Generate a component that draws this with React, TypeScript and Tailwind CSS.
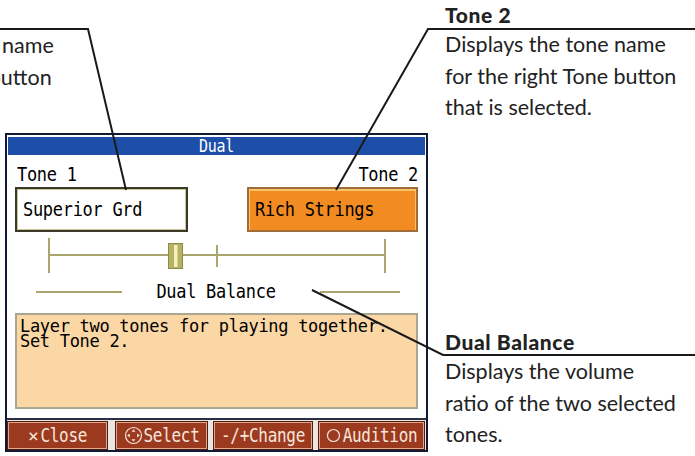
const lcd = "font-['DejaVu_Sans_Mono','Liberation_Mono',monospace] tracking-[-0.3px]";
const note = "font-['Lato','Noto_Sans',sans-serif]";

// taller, narrower look of the keyboard's LCD font
const Tall = ({ children }: { children: React.ReactNode }) => (
  <span className="inline-block scale-y-[1.18]">{children}</span>
);

const DpadIcon = () => (
  <svg width="19" height="19" viewBox="0 0 19 19" className="mr-[1px]">
    <circle cx="9.5" cy="9.5" r="8" fill="none" stroke="#f6e6dc" strokeWidth="1.2" />
    <path d="M9.5 3.2 L7.6 5.8 H11.4 Z M9.5 15.8 L7.6 13.2 H11.4 Z M3.2 9.5 L5.8 7.6 V11.4 Z M15.8 9.5 L13.2 7.6 V11.4 Z" fill="#f6e6dc" />
  </svg>
);

const RingIcon = () => (
  <svg width="15" height="15" viewBox="0 0 15 15" className="mr-[2px]">
    <circle cx="7.5" cy="7.5" r="6" fill="none" stroke="#f6e6dc" strokeWidth="1.2" />
  </svg>
);

const PanelButton = ({ width, children }: { width: string; children: React.ReactNode }) => (
  <div
    className={`${width} flex h-full items-center justify-center border border-[#5a1a0b] bg-[#9c3a1f] text-[16px] leading-none text-[#f6e6dc] shadow-[inset_0_0_0_1px_#d9a890] ${lcd}`}
  >
    {children}
  </div>
);

const Slider = () => (
  <svg width="419" height="35" viewBox="0 0 419 35">
    <line x1="42" y1="17" x2="378" y2="17" stroke="#aaa56c" strokeWidth="2" />
    <line x1="42" y1="0" x2="42" y2="35" stroke="#aaa56c" strokeWidth="2" />
    <line x1="210" y1="7" x2="210" y2="29" stroke="#aaa56c" strokeWidth="2" />
    <line x1="378" y1="1" x2="378" y2="35" stroke="#aaa56c" strokeWidth="2" />
    <rect x="161.5" y="5.5" width="14" height="25" fill="#b7b263" stroke="#8f8b50" />
    <rect x="167" y="7" width="3.5" height="22" fill="#f4f0bc" />
  </svg>
);

export default function App() {
  return (
    <div className="relative h-[456px] w-[695px] overflow-hidden bg-white">
      <div className="pl-[5px] pt-[133px]">
        <div className="flex h-[319px] w-[423px] flex-col border-2 border-[#101a36] bg-white">
          <div className={`mx-[1px] mt-[2px] flex h-[18px] items-center justify-center bg-[#1d4ea8] text-[15px] text-white ${lcd}`}>
            <Tall>Dual</Tall>
          </div>

          <div className={`mt-[9px] flex h-[22px] items-center justify-between pl-[10px] pr-[8px] text-[17px] text-black ${lcd}`}>
            <Tall>Tone 1</Tall>
            <Tall>Tone 2</Tall>
          </div>

          <div className={`mt-[1px] flex h-[45px] justify-between px-[8px] text-[17px] text-black ${lcd}`}>
            <div className="flex w-[173px] items-center border-2 border-[#3a3a28] bg-white pl-[6px] shadow-[inset_0_0_0_1px_#c9c597]">
              <Tall>Superior Grd</Tall>
            </div>
            <div className="flex w-[171px] items-center border-2 border-[#a06d38] bg-[#f28c22] pl-[6px] shadow-[inset_0_1px_0_1px_#f7c46a]">
              <Tall>Rich Strings</Tall>
            </div>
          </div>

          <div className="mt-[6px] h-[35px]">
            <Slider />
          </div>

          <div className={`mt-[10px] flex h-[18px] items-center text-[17px] text-black ${lcd}`}>
            <div className="ml-[29px] h-[2px] w-[86px] bg-[#aaa56c]" />
            <div className="flex-1 pr-[10px] text-center">
              <Tall>Dual Balance</Tall>
            </div>
            <div className="mr-[26px] h-[2px] w-[80px] bg-[#aaa56c]" />
          </div>

          <div
            className={`mx-[8px] mt-[12px] h-[96px] border-2 border-[#a9a78f] bg-[#fbd7a5] px-[3px] pt-[4px] text-[17px] leading-[15px] text-black ${lcd}`}
          >
            <div>Layer two tones for playing together.</div>
            <div>Set Tone 2.</div>
          </div>

          <div className="mt-auto flex h-[32px] gap-[5px] border-t-2 border-[#2a2f45] bg-[#e9e6e2] pr-[1px] pt-[1px]">
            <PanelButton width="w-[101px] mr-[2px]">
              <span className="mr-[2px] text-[18px] font-light">×</span>
              <Tall>Close</Tall>
            </PanelButton>
            <PanelButton width="w-[93px]">
              <DpadIcon />
              <Tall>Select</Tall>
            </PanelButton>
            <PanelButton width="w-[100px]">
              <Tall>-/+Change</Tall>
            </PanelButton>
            <PanelButton width="w-[107px]">
              <RingIcon />
              <Tall>Audition</Tall>
            </PanelButton>
          </div>
        </div>
      </div>

      <svg className="pointer-events-none absolute left-0 top-0" width="695" height="456" viewBox="0 0 695 456">
        <polyline points="0,29 88,29 126,190" fill="none" stroke="#1a1a1a" strokeWidth="2" />
        <polyline points="695,29 428,29 336,190" fill="none" stroke="#1a1a1a" strokeWidth="2" />
        <polyline points="695,355 443,355 312,290" fill="none" stroke="#1a1a1a" strokeWidth="2" />
      </svg>

      <div className={`absolute left-[-167px] top-[30px] whitespace-nowrap text-[21.5px] leading-[31.5px] text-[#222] ${note}`}>
        <div>Displays the tone name</div>
        <div>for the left Tone button</div>
        <div>that is selected.</div>
      </div>

      <div className={`absolute left-[445px] top-0 whitespace-nowrap text-[#222] ${note}`}>
        <div className="text-[21px] font-black leading-[29px] tracking-[0.6px]">Tone 2</div>
        <div className="text-[21.5px] leading-[31.5px]">
          <div>Displays the tone name</div>
          <div>for the right Tone button</div>
          <div>that is selected.</div>
        </div>
      </div>

      <div className={`absolute left-[445px] top-[328px] whitespace-nowrap text-[#222] ${note}`}>
        <div className="text-[21px] font-black leading-[28px] tracking-[0.6px]">Dual Balance</div>
        <div className="text-[21.5px] leading-[31.5px]">
          <div>Displays the volume</div>
          <div>ratio of the two selected</div>
          <div>tones.</div>
        </div>
      </div>
    </div>
  );
}
